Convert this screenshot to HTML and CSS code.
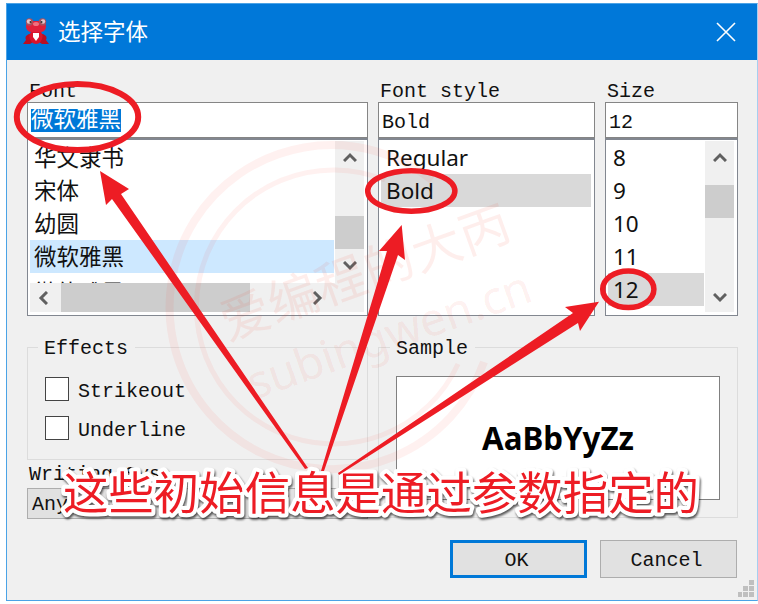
FILE: index.html
```html
<!DOCTYPE html>
<html lang="zh-CN">
<head>
<meta charset="utf-8">
<title>选择字体</title>
<link rel="stylesheet" href="styles.css">
</head>
<body>
<main class="dialog">
  <header class="titlebar">
    <svg class="logo" width="26" height="28" viewBox="0 0 26 28">
      <path d="M6 16Q1 18 3 22L0 26h7l3-2h6l3 2h7l-3-4q2-4-3-6z" fill="#b90f22"/>
      <ellipse cx="13" cy="18.500" rx="6.500" ry="7.500" fill="#d9142c"/>
      <rect x="3" y="3" width="20" height="11" rx="5.500" fill="#e0203a"/>
      <circle cx="6.500" cy="4" r="3.700" fill="#a8505e"/><circle cx="19.500" cy="4" r="3.700" fill="#a8505e"/>
      <circle cx="6" cy="3.500" r="2.200" fill="#e2c6cc"/><circle cx="20" cy="3.500" r="2.200" fill="#e2c6cc"/>
      <circle cx="7.500" cy="4" r="1" fill="#333"/><circle cx="18.500" cy="4" r="1" fill="#333"/>
      <ellipse cx="13" cy="6" rx="3" ry="2" fill="#f0707f"/>
      <path d="M10 15h6v4l-3 4-3-4z" fill="#fff"/>
    </svg>
    <h1>选择字体</h1>
    <svg class="close" width="20" height="20" viewBox="0 0 20 20"><path d="M1 1l18 18M19 1L1 19"/></svg>
  </header>
  <div class="content">
    <section class="pickers">
      <div class="picker">
        <label>Font</label>
        <div class="field"><span class="selected-text">微软雅黑</span></div>
        <div class="list">
          <div class="rows with-hbar">
            <div class="row">华文隶书</div><div class="row">宋体</div><div class="row">幼圆</div>
            <div class="row current">微软雅黑</div><div class="row partial">微软雅黑 Light</div>
          </div>
          <div class="vbar short">
            <svg width="14" height="10" viewBox="0 0 14 10"><path d="M1 9l6-6 6 6"/></svg>
            <i class="thumb low"></i>
            <svg width="14" height="10" viewBox="0 0 14 10"><path d="M1 1l6 6 6-6"/></svg>
          </div>
          <div class="hbar">
            <svg width="10" height="14" viewBox="0 0 10 14"><path d="M9 1L3 7l6 6"/></svg>
            <i class="hthumb"></i>
            <svg width="10" height="14" viewBox="0 0 10 14"><path d="M1 1l6 6-6 6"/></svg>
          </div>
        </div>
      </div>
      <div class="picker">
        <label>Font style</label>
        <div class="field">Bold</div>
        <div class="list plain">
          <div class="rows"><div class="row">Regular</div><div class="row muted">Bold</div></div>
        </div>
      </div>
      <div class="picker">
        <label>Size</label>
        <div class="field">12</div>
        <div class="list">
          <div class="rows">
            <div class="row">8</div><div class="row">9</div><div class="row">10</div><div class="row">11</div><div class="row muted">12</div>
          </div>
          <div class="vbar tall">
            <svg width="14" height="10" viewBox="0 0 14 10"><path d="M1 9l6-6 6 6"/></svg>
            <i class="thumb high"></i>
            <svg width="14" height="10" viewBox="0 0 14 10"><path d="M1 1l6 6 6-6"/></svg>
          </div>
        </div>
      </div>
    </section>
    <section class="options">
      <div class="left">
        <fieldset class="effects">
          <legend>Effects</legend>
          <label class="check"><i></i><span>Strikeout</span></label>
          <label class="check"><i></i><span>Underline</span></label>
        </fieldset>
        <label class="system-label">Writing Sys</label>
        <div class="combo">Any</div>
      </div>
      <fieldset class="sample">
        <legend>Sample</legend>
        <div class="preview">AaBbYyZz</div>
      </fieldset>
    </section>
    <footer class="actions">
      <button class="primary">OK</button>
      <button>Cancel</button>
    </footer>
  </div>
</main>
<svg class="overlay" width="758" height="604" viewBox="0 0 758 604">
  <g class="stamp">
    <path d="M484 362A162 162 0 1 1 432 180" stroke-width="8"/>
    <path d="M458 364A137 137 0 1 1 385 180" stroke-width="5"/>
    <text class="stamp-cn" transform="translate(228 341) rotate(-19.8)" textLength="304">爱编程的大丙</text>
    <text class="stamp-en" transform="translate(254 400) rotate(-19.5)" textLength="298">subingwen.cn</text>
  </g>
  <g class="marks">
    <ellipse cx="77.5" cy="117" rx="60.7" ry="33" stroke-width="6"/>
    <ellipse cx="411.3" cy="191" rx="43.6" ry="20.3" stroke-width="5.5"/>
    <ellipse cx="628.3" cy="289.2" rx="25.6" ry="18.3" stroke-width="5.5"/>
  </g>
  <text class="caption" x="63" y="509.5" textLength="636">这些初始信息是通过参数指定的</text>
  <g class="arrows">
    <path d="M100 171l29 18-8 5L308 468l-3 1L112 199l-6 6z"/>
    <path d="M401.7 225L405 260l-7-5L324 471h-3L387 251l-8 0z"/>
    <path d="M599 301.7L580 331l-2-8L339 475l-1-2L573 313l-8-6z"/>
  </g>
</svg>
<svg class="grip" width="17" height="18" viewBox="0 0 17 18"><path d="M11 0h5v5h-5zM5 6h5v5H5zM11 6h5v5h-5zM0 12h4v5H0zM5 12h5v5H5zM11 12h5v5h-5z"/></svg>
</body>
</html>
```
FILE: styles.css
```css
* { box-sizing: border-box; }
body { margin: 0; width: 758px; height: 604px; overflow: hidden; position: relative; background: #fff;
  font: 20px/24px "Liberation Mono", "Noto Sans CJK SC", monospace; color: #111; }
.dialog { margin: 3px 0 0 6px; width: 752px; height: 598px; border: 1px solid #4ba3e6; border-right-color: #a6cff0; background: #f0f0f0; }
.titlebar { height: 56px; background: #0078d9; display: flex; align-items: center; padding: 0 21px 0 16px; color: #fff; }
.logo { margin-right: 9px; }
.titlebar h1 { margin: 0; padding-bottom: 4px; font: 22.5px/32px "Noto Sans CJK SC", sans-serif; flex: 1; }
.close path { stroke: #fff; stroke-width: 1.6; fill: none; }
.content { padding: 20px 19px 0 20px; }
.pickers { display: grid; grid-template-columns: 341px 217px 133px; column-gap: 10px; }
.picker > label { display: block; height: 22px; padding-left: 2px; line-height: 24px; }
.picker { min-width: 0; }
.field { height: 36px; border: 1.5px solid #858585; background: #fff; padding: 6px 3px; line-height: 28px; }
.selected-text { display: block; width: 90px; height: 23px; line-height: 25px; font-size: 22.5px; background: #0078d7; color: #fff; white-space: nowrap; }
.list { height: 178px; border: 1px solid #828790; border-top-width: 2px; background: #fff; padding: 1px 3px 3px 2px;
  display: grid; grid-template-columns: 1fr 29px; grid-template-rows: 142px 29px; column-gap: 1px; }
.list.plain { grid-template-columns: 1fr; }
.rows { grid-row: 1 / 3; font: 22.5px/33px "Noto Sans", "Noto Sans CJK SC", sans-serif; overflow: hidden; }
.rows.with-hbar { grid-row: 1; }
.row { height: 33px; padding-left: 5px; white-space: nowrap; font-size: 22.5px; }
.with-hbar .row { padding-left: 4px; }
.with-hbar .partial { padding-top: 3px; }
.current { background: #cde8ff; }
.muted { background: #d9d9d9; }
.vbar { grid-row: 1 / 3; background: #f0f0f0; display: flex; flex-direction: column; align-items: center; padding: 11px 0 12px; }
.vbar.short { grid-row: 1; }
.vbar.tall { padding-bottom: 9px; }
.vbar svg, .hbar svg { fill: none; stroke: #606060; stroke-width: 3; flex: none; }
.thumb { width: 29px; height: 33px; background: #cdcdcd; margin-bottom: auto; }
.low { margin-top: 54px; }
.high { margin-top: 23px; }
.hbar { grid-column: 1 / 3; background: #f0f0f0; display: flex; align-items: center; padding-left: 8px; }
.hthumb { width: 189px; height: 29px; background: #cdcdcd; margin: 0 63px 0 13px; }
.options { margin-top: 19px; display: grid; grid-template-columns: 341px 360px; column-gap: 10px; }
fieldset { margin: 0; border: 1px solid #dcdcdc; min-width: 0; }
legend { padding: 0 7px 0 6px; height: 24px; line-height: 28px; }
.effects { height: 125px; padding: 0 17px 0 10px; }
.check { display: flex; align-items: center; gap: 9px; height: 24px; margin: 18px 0 15px 7px; }
.check + .check { margin: 15px 0 0 7px; }
.check i { width: 24px; height: 24px; border: 1.5px solid #444; background: #fff; }
.check span { padding-top: 5px; }
.system-label { display: block; margin: 2px 0 2px 2px; height: 24px; line-height: 26px; }
.combo { height: 31px; background: #e1e1e1; border: 1px solid #adadad; line-height: 32px; padding-left: 4px; }
.sample { height: 183px; padding: 0 17px 0 11px; }
.preview { height: 124px; margin: 17px 0 0 6px; border: 1px solid #808080; background: #fff; display: flex; align-items: center; justify-content: center; font: bold 31.3px/40px "Noto Sans", sans-serif; color: #000; }
.actions { display: flex; justify-content: flex-end; gap: 13px; margin: 21px 1px 0 0; }
button { width: 137px; height: 38px; padding: 4px 4px 0 0; font: inherit; color: inherit; background: #e1e1e1; border: 1px solid #adadad; }
.primary { border: 3px solid #0078d7; padding-top: 3px; }
.overlay { position: absolute; left: 0; top: 0; pointer-events: none; }
.stamp { fill: rgba(240, 60, 40, .085); }
.stamp path { fill: none; stroke: rgba(255, 70, 50, .075); }
.stamp-cn { font: 400 50px "Noto Sans CJK SC", sans-serif; }
.stamp-en { font: 400 46px "Noto Sans", sans-serif; }
.marks { fill: none; stroke: #ed1c24; }
.arrows { fill: #ed1c24; }
.caption { font: 45.4px "Noto Sans CJK SC", sans-serif; fill: #ed1c24; stroke: #fff; stroke-width: 8px; stroke-linejoin: round; paint-order: stroke; filter: drop-shadow(1px 2px 1px rgba(0, 0, 0, .65)); }
.grip { position: absolute; left: 738px; top: 580px; fill: #bfbfbf; }
```
